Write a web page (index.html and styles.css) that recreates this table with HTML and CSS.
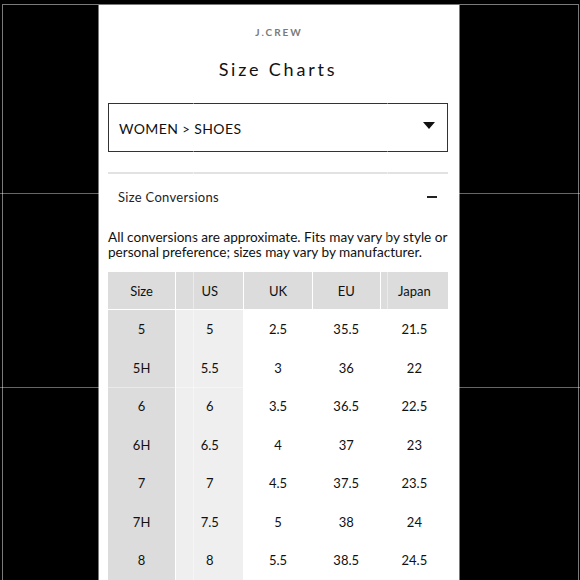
FILE: index.html
```html
<!DOCTYPE html>
<html>
<head>
<meta charset="utf-8">
<link rel="stylesheet" href="styles.css">
</head>
<body>
<div class="frame">
  <div class="side side-left"></div>
  <main class="panel">
    <div class="logo">J.CREW</div>
    <h1 class="title">Size Charts</h1>
    <div class="select">
      <span class="select-text">WOMEN <span class="chev">&gt;</span> SHOES</span>
      <svg class="caret" width="12" height="8" viewBox="0 0 12 8"><path d="M0 0H12L6 7Z" fill="#111"/></svg>
    </div>
    <div class="divider"></div>
    <div class="acc-head">
      <span>Size Conversions</span>
      <span class="minus"></span>
    </div>
    <p class="note">All conversions are approximate. Fits may vary by style or<br>personal preference; sizes may vary by manufacturer.</p>
    <div class="table">
      <div class="th">Size</div><div class="th">US</div><div class="th">UK</div><div class="th">EU</div><div class="th">Japan</div>
      <div class="td c1">5</div><div class="td c2">5</div><div class="td">2.5</div><div class="td">35.5</div><div class="td">21.5</div>
      <div class="td c1">5H</div><div class="td c2">5.5</div><div class="td">3</div><div class="td">36</div><div class="td">22</div>
      <div class="td c1">6</div><div class="td c2">6</div><div class="td">3.5</div><div class="td">36.5</div><div class="td">22.5</div>
      <div class="td c1">6H</div><div class="td c2">6.5</div><div class="td">4</div><div class="td">37</div><div class="td">23</div>
      <div class="td c1">7</div><div class="td c2">7</div><div class="td">4.5</div><div class="td">37.5</div><div class="td">23.5</div>
      <div class="td c1">7H</div><div class="td c2">7.5</div><div class="td">5</div><div class="td">38</div><div class="td">24</div>
      <div class="td c1">8</div><div class="td c2">8</div><div class="td">5.5</div><div class="td">38.5</div><div class="td">24.5</div>
      <div class="td c1"></div><div class="td c2"></div><div class="td"></div><div class="td"></div><div class="td"></div>
    </div>
  </main>
  <div class="side side-right"></div>
</div>
<div class="grid-overlay">
  <div class="gl gl-v gl-v1"></div>
  <div class="gl gl-v gl-v2"></div>
  <div class="gl gl-h gl-h1"></div>
  <div class="gl gl-h gl-h2"></div>
</div>
</body>
</html>
```
FILE: styles.css
```css
* { box-sizing: border-box; }
html, body { margin: 0; padding: 0; }
body {
  width: 580px;
  height: 580px;
  overflow: hidden;
  background: #000;
  font-family: Lato, "Noto Sans", sans-serif;
  color: #1e1e1e;
  position: relative;
}
.frame {
  margin: 4px 0 0 2px;
  width: 577px;
  height: 576px;
  display: flex;
  border-top: 1px solid #7a7a7a;
  border-left: 1px solid #7a7a7a;
  border-right: 1px solid #7a7a7a;
}
.side { background: #000; }
.side-left { width: 96px; border-right: 1px solid #7a7a7a; }
.side-right { width: 117px; border-left: 1px solid #7a7a7a; }
.panel {
  width: 360px;
  background: #fff;
  padding: 21px 11px 0 9px;
  overflow: hidden;
}
.logo {
  text-align: center;
  font-size: 10px;
  line-height: 12px;
  font-weight: 700;
  letter-spacing: 2px;
  color: #7a7a7a;
  padding-left: 2px;
}
.title {
  margin: 20px 0 0;
  text-align: center;
  font-size: 18px;
  line-height: 22px;
  font-weight: 400;
  letter-spacing: 2.8px;
  color: #111;
}
.select {
  margin-top: 23px;
  height: 49px;
  border: 1px solid #333;
  display: flex;
  align-items: center;
  justify-content: space-between;
  padding: 0 12px 0 10px;
}
.select-text {
  font-size: 14px;
  letter-spacing: 0.4px;
  color: #111;
  padding-top: 1px;
}
.chev { font-size: 13px; }
.caret { margin-top: -3px; }
.divider {
  margin-top: 20px;
  height: 2px;
  background: #e2e2e2;
}
.acc-head {
  height: 46px;
  display: flex;
  align-items: center;
  justify-content: space-between;
  padding: 0 11px 0 10px;
  font-size: 13px;
  letter-spacing: 0.3px;
  color: #222;
}
.minus {
  width: 10px;
  height: 1.5px;
  background: #222;
}
.note {
  margin: 10px 0 0;
  font-size: 13.6px;
  line-height: 14.5px;
  color: #111;
}
.table {
  margin-top: 13px;
  display: grid;
  grid-template-columns: repeat(5, 1fr);
  column-gap: 1px;
  font-size: 13px;
  color: #111;
}
.th {
  height: 38px;
  background: #dcdcdc;
  display: flex;
  align-items: center;
  justify-content: center;
  border-bottom: 1px solid #fff;
}
.td {
  height: 38.5px;
  display: flex;
  align-items: center;
  justify-content: center;
}
.c1 { background: #dcdcdc; }
.c2 { background: #efefef; }
.grid-overlay {
  position: absolute;
  inset: 0;
  pointer-events: none;
}
.gl { position: absolute; background: rgba(255,255,255,0.4); }
.gl-v { top: 5px; bottom: 0; width: 1px; }
.gl-h { left: 0; right: 0; height: 1px; }
.gl-v1 { left: 193px; }
.gl-v2 { left: 387px; }
.gl-h1 { top: 193px; }
.gl-h2 { top: 387px; }
```
